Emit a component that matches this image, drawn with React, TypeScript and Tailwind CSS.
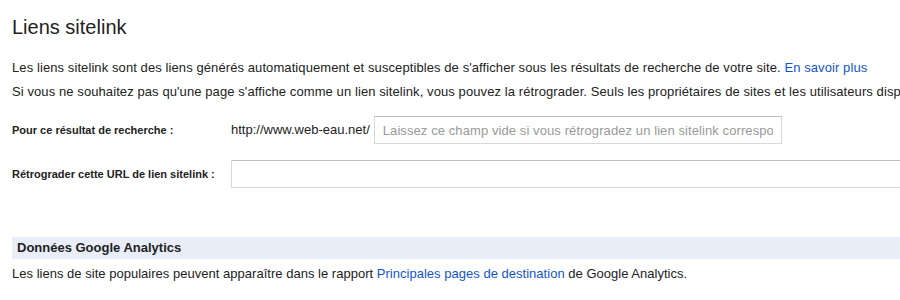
import React from "react";

const inputCls =
  "h-[28px] px-2 text-[13px] text-[#222] placeholder:text-[#999] border border-[#d9d9d9] border-t-[#c0c0c0] outline-none bg-white font-['Arial','Liberation_Sans',sans-serif]";

export default function App() {
  return (
    <div className="w-[900px] h-[300px] overflow-hidden bg-white text-[13px] leading-[16px] text-[#222] font-['Arial','Liberation_Sans',sans-serif]">
      <div className="pl-3">
        {/* Title */}
        <h1 className="pt-[15px] text-[20px] leading-[24px] font-normal text-[#222]">
          Liens sitelink
        </h1>

        {/* Intro */}
        <p className="mt-[21px] whitespace-nowrap tracking-[0.09px]">
          Les liens sitelink sont des liens générés automatiquement et susceptibles de s'afficher sous les résultats de
          recherche de votre site. <a className="text-[#15c]">En savoir plus</a>
        </p>
        <p className="mt-2 whitespace-nowrap tracking-[0.09px]">
          Si vous ne souhaitez pas qu'une page s'affiche comme un lien sitelink, vous pouvez la rétrograder. Seuls les
          propriétaires de sites et les utilisateurs disposant de droits complets peuvent rétrograder un lien sitelink.
        </p>

        {/* Form rows */}
        <div className="mt-4 flex items-center">
          <label className="w-[219px] shrink-0 text-[11px] font-bold">Pour ce résultat de recherche :</label>
          <span className="whitespace-nowrap">http://www.web-eau.net/</span>
          <input
            className={`${inputCls} ml-[4px] w-[408px] shrink-0 tracking-[0.09px]`}
            placeholder="Laissez ce champ vide si vous rétrogradez un lien sitelink correspondant à la page d'accueil"
          />
        </div>
        <div className="mt-4 flex items-center">
          <label className="w-[219px] shrink-0 text-[11px] font-bold">Rétrograder cette URL de lien sitelink :</label>
          <input className={`${inputCls} w-[720px] shrink-0`} />
        </div>

        {/* Analytics */}
        <div className="mt-[49px] h-[22px] flex items-center pl-[5px] bg-[#e8edf8] font-bold">
          Données Google Analytics
        </div>
        <p className="mt-[7px] whitespace-nowrap tracking-[0.02px]">
          Les liens de site populaires peuvent apparaître dans le rapport{" "}
          <a className="text-[#15c]">Principales pages de destination</a> de Google Analytics.
        </p>
      </div>
    </div>
  );
}
